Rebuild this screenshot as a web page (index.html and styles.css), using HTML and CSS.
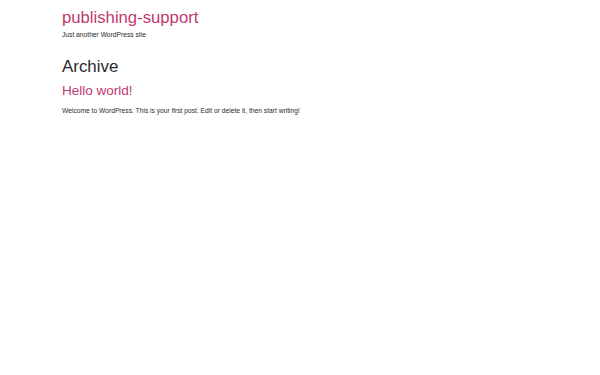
FILE: index.html
```html
<!DOCTYPE html>
<html lang="en">
<head>
<meta charset="utf-8">
<title>Archive – publishing-support</title>
<link rel="stylesheet" href="styles.css">
</head>
<body>
<div class="site">
  <header class="site-header">
    <p class="site-title"><a href="#">publishing-support</a></p>
    <p class="site-description">Just another WordPress site</p>
  </header>
  <main class="site-main">
    <h1 class="page-title">Archive</h1>
    <article class="post">
      <h2 class="entry-title"><a href="#">Hello world!</a></h2>
      <div class="entry-content">
        <p>Welcome to WordPress. This is your first post. Edit or delete it, then start writing!</p>
      </div>
    </article>
  </main>
</div>
</body>
</html>
```
FILE: styles.css
```css
html, body {
  margin: 0;
  padding: 0;
  background: #ffffff;
}
body {
  font-family: "Liberation Sans", Arial, sans-serif;
  color: #1e1e1e;
}
.site {
  padding: 6px 62px 0;
}
.site-header {
  display: flex;
  flex-direction: column;
}
.site-title {
  margin: 0;
  font-size: 16.7px;
  line-height: 24px;
}
.site-title a,
.entry-title a {
  color: #bf3a6e;
  text-decoration: none;
}
.site-description {
  margin: 0;
  font-size: 6.7px;
  line-height: 10px;
  color: #2a2a2a;
}
.page-title {
  margin: 15px 0 0;
  font-size: 16.9px;
  font-weight: 400;
  line-height: 24px;
  color: #2b2b2b;
}
.entry-title {
  margin: 0;
  font-size: 13.5px;
  font-weight: 400;
  line-height: 24px;
}
.entry-content p {
  margin: 3px 0 0;
  font-size: 6.7px;
  line-height: 10px;
  color: #2a2a2a;
}
```
